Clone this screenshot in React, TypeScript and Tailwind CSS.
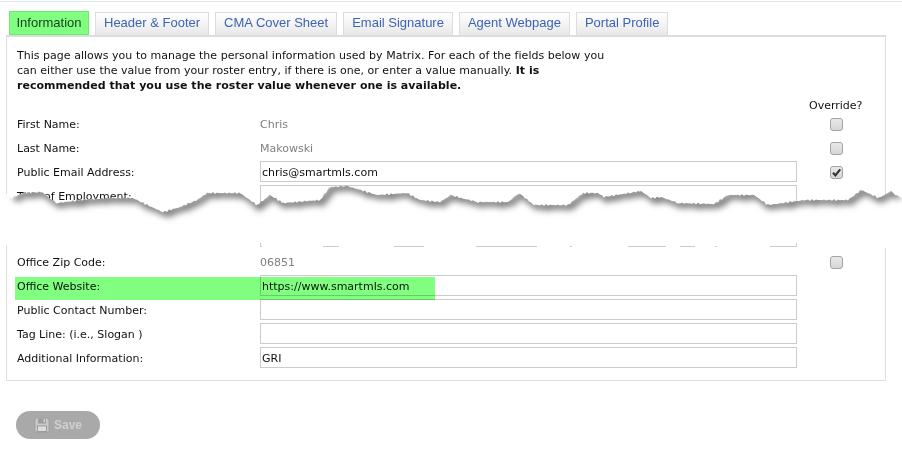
import React from 'react';

const tabs = ['Header & Footer', 'CMA Cover Sheet', 'Email Signature', 'Agent Webpage', 'Portal Profile'];

// rough outline of the torn edge, page coordinates
const edge: [number, number][] = [
  [12, 198], [23, 193], [42, 192], [48, 197], [57, 203], [80, 200], [110, 198], [133, 198], [147, 205], [163, 212], [180, 207],
  [197, 200], [207, 193], [240, 193], [257, 205], [270, 195], [283, 203], [320, 200], [330, 187], [347, 186], [367, 192],
  [377, 195], [407, 193], [420, 200], [440, 202], [451, 195], [461, 198], [478, 202], [508, 202], [519, 193], [534, 205],
  [568, 205], [583, 193], [598, 193], [604, 197], [641, 191], [651, 198], [661, 197], [678, 203], [714, 204], [728, 195],
  [754, 195], [768, 205], [804, 200], [848, 200], [861, 190], [879, 198], [891, 191], [899, 198],
];

function jagged() {
  const pts: string[] = [];
  for (let i = 0; i < edge.length - 1; i++) {
    const [x0, y0] = edge[i];
    const [x1, y1] = edge[i + 1];
    for (let x = x0; x < x1; x += 2) {
      const y = y0 + ((y1 - y0) * (x - x0)) / (x1 - x0);
      const noise = Math.sin(x * 1.7) * 0.6 + Math.sin(x * 4.3) * 0.5;
      pts.push(`${x} ${(y + noise - 180).toFixed(1)}`);
    }
  }
  return pts;
}

const edgePts = jagged();
const edgeLine = 'M' + edgePts.join(' L');
const tearFill = `M0 8 L${edgePts.join(' L')} L902 18 L902 63 L0 63 Z`;

// stretches of the hidden input's bottom border that the tear wipes out
const wiped = [
  [262, 61], [339, 55], [424, 52], [537, 33], [572, 56], [666, 14], [695, 20], [717, 53],
];

function Check({ checked }: { checked?: boolean }) {
  return (
    <span className="relative mx-auto block h-[13px] w-[13px] -translate-y-px rounded-[3px] border border-[#a3a3a3] bg-gradient-to-b from-[#e9e9e9] to-[#d6d6d6]">
      {checked && (
        <svg viewBox="0 0 13 13" className="absolute left-[-1px] top-[-1px] h-[13px] w-[13px]">
          <path d="M3 6.8 L5.4 9.4 L10.2 3.4" fill="none" stroke="#333" strokeWidth="2.2" />
        </svg>
      )}
    </span>
  );
}

function Row({ label, value, text, checkbox, checked, tall }: {
  label: string;
  value?: string;
  text?: string;
  checkbox?: boolean;
  checked?: boolean;
  tall?: boolean;
}) {
  return (
    <div className={`grid grid-cols-[243px_537px_78px] ${tall ? 'h-[66px] items-start' : 'h-[24px] items-center'}`}>
      <span className={`text-[#111] ${tall ? 'mt-[4px]' : ''}`}>{label}</span>
      {text !== undefined ? (
        <span className="text-[#808080]">{text}</span>
      ) : (
        <input
          readOnly
          value={value ?? ''}
          className={`w-full border border-[#cccccc] bg-white px-[1px] text-[#111] outline-none ${tall ? 'h-[62px]' : 'h-[21px] -translate-y-[2px] pt-[2px]'}`}
        />
      )}
      <span className="block pl-[1px]">{checkbox && <Check checked={checked} />}</span>
    </div>
  );
}

export default function App() {
  return (
    <div className="relative h-[451px] w-[902px] overflow-hidden bg-white font-['DejaVu_Sans',Verdana,sans-serif] text-[11px]">
      <div className="mt-[1px] h-[1px] bg-[#dfe7ee]" />

      {/* Tabs */}
      <div className="flex h-[33px] items-end gap-[6px] pl-[9px] font-['Liberation_Sans',Arial,sans-serif] text-[13px]">
        <div className="flex h-[24px] w-[80px] items-center justify-center border border-[#6fe86f] bg-[#80ff80] pb-[1px] text-[#17421f]">
          Information
        </div>
        {tabs.map((t) => (
          <div
            key={t}
            className="flex h-[23px] items-center border border-b-0 border-[#dddddd] bg-gradient-to-b from-white to-[#e8e8e8] px-[8px] pb-[2px] text-[#3c63b4]"
          >
            {t}
          </div>
        ))}
      </div>

      {/* Panel */}
      <div className="ml-[6px] h-[346px] w-[880px] border border-t-2 border-[#dddddd] px-[10px] pt-[11px]">
        <p className="w-[600px] leading-[15px] tracking-[0.02px] text-[#111]">
          This page allows you to manage the personal information used by Matrix. For each of the fields below you can
          either use the value from your roster entry, if there is one, or enter a value manually.{' '}
          <b>It is recommended that you use the roster value whenever one is available.</b>
        </p>
        <div className="mt-[6px] h-[14px] pl-[792px] leading-[14px] text-[#111]">Override?</div>
        <Row label="First Name:" text="Chris" checkbox />
        <Row label="Last Name:" text="Makowski" checkbox />
        <Row label="Public Email Address:" value="chris@smartmls.com" checkbox checked />
        <Row label="Title of Employment:" tall />
        <Row label="Office Zip Code:" text="06851" checkbox />
        <Row label="Office Website:" value="https://www.smartmls.com" />
        <Row label="Public Contact Number:" />
        <Row label="Tag Line: (i.e., Slogan )" />
        <Row label="Additional Information:" value="GRI" />
      </div>

      {/* Save */}
      <div className="ml-[16px] mt-[30px] flex h-[28px] w-[84px] items-center gap-[4px] rounded-full bg-[#a9a9a9] pl-[18px] font-['Liberation_Sans',Arial,sans-serif] font-bold text-[#d0d0d0]">
        <svg viewBox="0 0 16 16" className="h-[16px] w-[16px]">
          <path d="M1 1 H13 L15 3 V15 H1 Z" fill="#c9c9c9" stroke="#9a9a9a" strokeWidth="0.8" />
          <rect x="4" y="1.5" width="8" height="5" fill="#9c9c9c" />
          <rect x="9.5" y="2.2" width="1.6" height="3" fill="#d8d8d8" />
          <rect x="3.5" y="9" width="9" height="5.5" fill="#dddddd" stroke="#8f8f8f" strokeWidth="0.8" />
        </svg>
        <span className="text-[12px]">Save</span>
      </div>

      {/* Green marker over the website row */}
      <div className="absolute left-[15px] top-[277px] h-[23px] w-[420px] bg-[#80ff80] mix-blend-multiply" />

      {/* Torn-page break */}
      <svg className="absolute left-0 top-[180px]" width="902" height="72" viewBox="0 0 902 72">
        <defs>
          <clipPath id="tear">
            <path d={tearFill} />
          </clipPath>
          <filter id="soft" x="-5%" y="-100%" width="110%" height="300%">
            <feGaussianBlur stdDeviation="3" />
          </filter>
        </defs>
        <path d={tearFill} fill="#ffffff" />
        <g clipPath="url(#tear)">
          <path d={edgeLine} transform="translate(3 1)" fill="none" stroke="#7a7a7a" strokeWidth="7" filter="url(#soft)" />
        </g>
        {wiped.map(([x, w]) => (
          <rect key={x} x={x} y="63" width={w} height="6" fill="#ffffff" />
        ))}
        <rect x="4" y="60" width="5" height="5" fill="#ffffff" />
        <rect x="883" y="60" width="5" height="8" fill="#ffffff" />
      </svg>
    </div>
  );
}
